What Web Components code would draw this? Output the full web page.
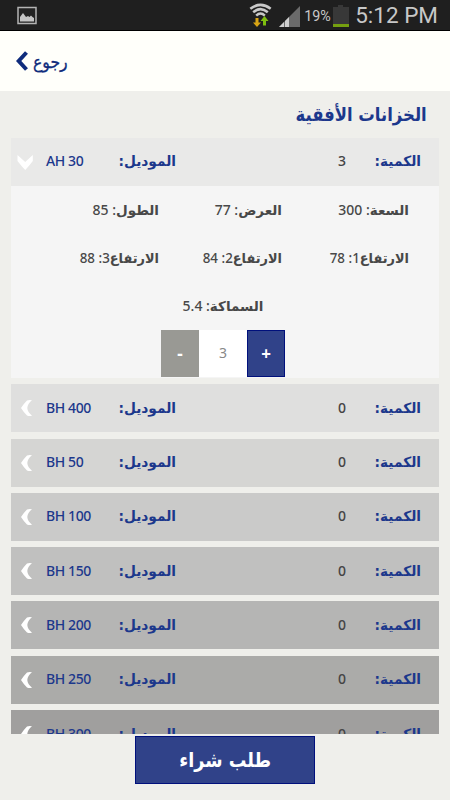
<!DOCTYPE html>
<html lang="ar">
<head>
<meta charset="utf-8">
<title>الخزانات الأفقية</title>
<style>
  body {
    margin: 0;
    background: #efefeb;
    font-family: "Noto Sans", "DejaVu Sans", sans-serif;
  }
</style>
</head>
<body>
<tank-app></tank-app>

<script>
// Define templates.
const template = (html) => {
  const element = document.createElement('template')
  element.innerHTML = html
  return element
}

/**
 * Base class, attaches a shadow root with a clone of the template.
 */
class BaseElement extends HTMLElement {
  constructor() {
    super()
    this.attachShadow({ mode: 'open' })
      .appendChild(this.constructor.template.content.cloneNode(true))
  }
}

customElements.define('status-bar', class extends BaseElement {
  static template = template(`
    <style>
      :host {
        display: flex;
        align-items: center;
        box-sizing: border-box;
        height: 31px;
        padding: 0 12px 0 16px;
        background: #1f1f1f;
        border-bottom: 1px solid #000;
        color: #c8c8c8;
        font-family: Roboto, sans-serif;
      }
      svg { display: block; flex: none; }
      .space { flex: 1; }
      .percent { font-size: 14.300px; width: 26px; margin: 2px 2px 0 4px; white-space: nowrap; }
      .time { font-size: 22.500px; margin-left: 6px; white-space: nowrap; }
    </style>
    <svg width="22" height="19" viewBox="0 0 22 19">
      <rect x="2" y="1.5" width="18" height="16" fill="#222" stroke="#b4b4b4" stroke-width="1.5"/>
      <path d="M4 15.500V11l3-4 3 4 2-1 1.500 1 1.500-1.500 1.500 1.500 1.500 1v3.500z" fill="#c4c4c4"/>
    </svg>
    <span class="space"></span>
    <svg width="23" height="25" viewBox="0 0 23 25">
      <g fill="none" stroke="#c9c9c9" stroke-width="2.500">
        <path d="M1.300 5.800Q11.500-2 21.700 5.800"/>
        <path d="M4.200 9.300Q11.500 3 18.800 9.300"/>
        <path d="M7.200 12.600Q11.500 8.500 15.800 12.600"/>
      </g>
      <path d="M6.500 15h3v4.500H12l-4 4.500-4-4.500h2.500z" fill="#d9a515"/>
      <path d="M14 22.500h3V18h2.500l-4-5-4 5H14z" fill="#7fbf10"/>
    </svg>
    <svg width="21" height="21" viewBox="0 0 21 21" style="margin:2px 0 0 7px">
      <path d="M0 21L21 0v21z" fill="#6b6b6b"/>
      <path d="M0 21l5-5v5zM6 21v-6l4-4v10z" fill="#d0d0d0"/>
    </svg>
    <span class="percent">19%</span>
    <svg width="16" height="22" viewBox="0 0 16 22" style="margin:2px 0 0 1px">
      <path d="M0 2h5V0h5v2h6v17H0z" fill="#383838"/>
      <path d="M0 19h16v3H0z" fill="#75a010"/>
    </svg>
    <span class="time">5:12 PM</span>
  `)
})

customElements.define('app-header', class extends BaseElement {
  static template = template(`
    <style>
      :host {
        display: flex;
        align-items: center;
        box-sizing: border-box;
        height: 60px;
        padding: 0 0 0 16px;
        gap: 5px;
        background: #fffffa;
        color: #0f2c7c;
        font: 18px "DejaVu Sans", sans-serif;
      }
      svg { display: block; }
      span { transform: scaleX(.87); transform-origin: left; -webkit-text-stroke: .3px; }
    </style>
    <svg width="12" height="20" viewBox="0 0 12 20">
      <path d="M10.500 1.500L2.700 10l7.800 8.500" fill="none" stroke="#0f2c7c" stroke-width="4"/>
    </svg>
    <span dir="rtl"><slot></slot></span>
  `)
})

customElements.define('page-title', class extends BaseElement {
  static template = template(`
    <style>
      :host {
        display: block;
        height: 46.700px;
        padding-right: 23px;
        direction: rtl;
        color: #1c388c;
        font: bold 19px/46px "DejaVu Sans", sans-serif;
      }
      span { display: inline-block; transform: scaleX(.865); transform-origin: right; }
    </style>
    <span><slot></slot></span>
  `)
})

customElements.define('tank-row', class extends BaseElement {
  static template = template(`
    <style>
      :host {
        display: grid;
        grid-template-columns: 35px 73px 57px 170px 75px;
        align-items: center;
        height: 48px;
        background: var(--shade);
        color: #1c388c;
        font-size: 14px;
        white-space: nowrap;
      }
      svg { display: block; margin-left: 6px; }
      .label {
        direction: rtl;
        font: bold 14px "DejaVu Sans", sans-serif;
        margin-bottom: 1px;
        transform: scaleX(.98);
        transform-origin: right;
      }
      .code, .count { font-weight: 500; margin-bottom: 2px; }
      .code { letter-spacing: -.400px; }
      .count { color: #444; text-align: right; }
      .down { display: none; }
      :host([open]) .down { display: block; }
      :host([open]) .left { display: none; }
    </style>
    <svg class="left" width="18" height="18" viewBox="0 0 18 18">
      <path d="M10 1.500Q12.500.500 15 1.300 10.500 5 10.300 9q.2 4 4.700 7.700-2.500.8-5-.2Q6.500 13 4 9 6.500 5 10 1.500z" fill="#fff"/>
    </svg>
    <svg class="down" width="18" height="18" viewBox="0 0 18 18">
      <path d="M.500 2L8.200 9 15.800 2v6Q12.500 12.500 8.200 17 4 12.500.500 8z" fill="#fff"/>
    </svg>
    <span class="code"><slot></slot></span>
    <span class="label">الموديل:</span>
    <span class="count"></span>
    <span class="label">الكمية:</span>
  `)

  connectedCallback() {
    this.shadowRoot.querySelector('.count').textContent = this.getAttribute('count')
  }
})

customElements.define('tank-spec', class extends BaseElement {
  static template = template(`
    <style>
      :host {
        display: block;
        direction: rtl;
        color: #484848;
        font-size: 14px;
        font-weight: 500;
        line-height: 47px;
        height: 48px;
        white-space: nowrap;
        transform-origin: right;
      }
      :host([index]) { transform: scaleX(.955); }
      b { font-family: "DejaVu Sans", sans-serif; font-size: 13.500px; }
    </style>
    <b></b><span class="index"></span>: <slot></slot>
  `)

  connectedCallback() {
    this.shadowRoot.querySelector('b').textContent = this.getAttribute('name')
    this.shadowRoot.querySelector('.index').textContent = this.getAttribute('index') || ''
  }
})

customElements.define('quantity-stepper', class extends BaseElement {
  static template = template(`
    <style>
      :host {
        display: grid;
        grid-template-columns: 38.500px 47.500px 38.500px;
        height: 47px;
        line-height: 46px;
        text-align: center;
        font-size: 14px;
      }
      button {
        padding: 0;
        border: 0;
        color: #fff;
        font: bold 17px "Noto Sans", sans-serif;
      }
      .minus { background: #999994; }
      .plus { background: #304289; border: 1px solid #00107c; }
      .value { background: #fff; color: #888; }
    </style>
    <button class="minus">-</button>
    <span class="value"><slot></slot></span>
    <button class="plus">+</button>
  `)
})

customElements.define('tank-details', class extends BaseElement {
  static template = template(`
    <style>
      :host {
        display: block;
        box-sizing: border-box;
        height: 192.300px;
        background: #f5f5f5;
      }
      .specs {
        display: grid;
        grid-template-columns: 127px 123px 148px;
        direction: rtl;
        padding-right: 30px;
      }
      .last { display: flex; justify-content: center; padding-right: 4px; }
      .stepper { display: flex; justify-content: center; padding-right: 4px; }
    </style>
    <div class="specs"><slot></slot></div>
    <div class="last"><slot name="last"></slot></div>
    <div class="stepper"><slot name="stepper"></slot></div>
  `)
})

customElements.define('order-button', class extends BaseElement {
  static template = template(`
    <style>
      :host { display: flex; justify-content: center; padding-top: 2.500px; }
      button {
        width: 180px;
        height: 48px;
        padding: 0 0 1px;
        border: 1px solid #00107c;
        background: #304289;
        color: #fff;
        direction: rtl;
        font: bold 20px "DejaVu Sans", sans-serif;
      }
      span { display: inline-block; transform: scaleX(.88); }
    </style>
    <button><span><slot></slot></span></button>
  `)
})

customElements.define('tank-app', class extends BaseElement {
  static template = template(`
    <style>
      :host { display: flex; flex-direction: column; height: 800px; overflow: hidden; }
      .list {
        display: flex;
        flex-direction: column;
        gap: 6.300px;
        height: 596.100px;
        margin: 0 11px;
        overflow: hidden;
      }
      .list > * { flex: none; }
    </style>
    <status-bar></status-bar>
    <app-header>رجوع</app-header>
    <page-title>الخزانات الأفقية</page-title>
    <div class="list">
      <div>
        <tank-row open count="3" style="--shade:#e9e9e8">AH 30</tank-row>
        <tank-details>
          <tank-spec name="السعة">300</tank-spec>
          <tank-spec name="العرض">77</tank-spec>
          <tank-spec name="الطول">85</tank-spec>
          <tank-spec name="الارتفاع" index="1">78</tank-spec>
          <tank-spec name="الارتفاع" index="2">84</tank-spec>
          <tank-spec name="الارتفاع" index="3">88</tank-spec>
          <tank-spec slot="last" name="السماكة">5.4</tank-spec>
          <quantity-stepper slot="stepper">3</quantity-stepper>
        </tank-details>
      </div>
      <tank-row count="0" style="--shade:#dfdfde">BH 400</tank-row>
      <tank-row count="0" style="--shade:#d5d5d3">BH 50</tank-row>
      <tank-row count="0" style="--shade:#cacac9">BH 100</tank-row>
      <tank-row count="0" style="--shade:#c0c0bf">BH 150</tank-row>
      <tank-row count="0" style="--shade:#b5b5b4">BH 200</tank-row>
      <tank-row count="0" style="--shade:#ababa9">BH 250</tank-row>
      <tank-row count="0" style="--shade:#a09f9e">BH 300</tank-row>
    </div>
    <order-button>طلب شراء</order-button>
  `)
})
</script>
</body>
</html>
